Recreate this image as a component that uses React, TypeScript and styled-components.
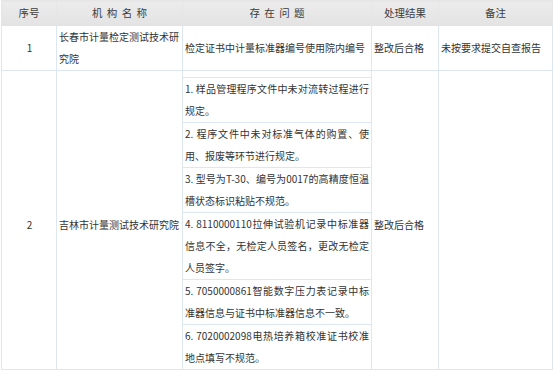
import React from 'react';
import styled, { createGlobalStyle } from 'styled-components';

const GlobalStyle = createGlobalStyle`
  html, body {
    margin: 0;
    padding: 0;
    background: #ffffff;
  }
  body {
    font-family: "Noto Sans CJK SC", "Noto Sans", sans-serif;
    color: #333333;
  }
`;

const Table = styled.table`
  width: 551px;
  margin: 0 0 0 1px;
  border-collapse: collapse;
  table-layout: fixed;
  font-size: 10px;
  line-height: 22px;
  color: #333333;

  th, td {
    box-sizing: border-box;
  }
`;

const Col = styled.col<{ $w: number }>`
  width: ${(p) => p.$w}px;
`;

const HeadCell = styled.th`
  height: 25px;
  padding: 0;
  font-weight: normal;
  font-size: 10.5px;
  color: #3c3c3c;
  text-align: center;
  vertical-align: middle;
  background: linear-gradient(#ececec, #e3e3e3);
  border: 1px solid #e6e6e6;
  border-bottom-color: #dae5f2;
  word-spacing: 2px;
`;

const Cell = styled.td<{ $align?: 'left' | 'center'; $pad?: number }>`
  padding: ${(p) => p.$pad ?? 0}px 1px 0 2px;
  border: 1px solid #dde7f3;
  text-align: ${(p) => p.$align ?? 'left'};
  vertical-align: middle;
  word-break: break-all;
`;

const IssueCell = styled.td<{ $empty?: boolean }>`
  padding: ${(p) => (p.$empty ? '0' : '0 2px')};
  height: ${(p) => (p.$empty ? '7px' : 'auto')};
  line-height: ${(p) => (p.$empty ? '0' : 'inherit')};
  border: 1px solid #dde7f3;
  vertical-align: top;
`;

const Line = styled.span<{ $justify?: boolean }>`
  display: block;
  text-align: ${(p) => (p.$justify ? 'justify' : 'left')};
  text-align-last: ${(p) => (p.$justify ? 'justify' : 'left')};
  white-space: nowrap;
`;

const issues: string[][] = [
  ['1. 样品管理程序文件中未对流转过程进行', '规定。'],
  ['2. 程序文件中未对标准气体的购置、使', '用、报废等环节进行规定。'],
  ['3. 型号为T-30、编号为0017的高精度恒温', '槽状态标识粘贴不规范。'],
  ['4. 8110000110拉伸试验机记录中标准器', '信息不全，无检定人员签名，更改无检定', '人员签字。'],
  ['5. 7050000861智能数字压力表记录中标', '准器信息与证书中标准器信息不一致。'],
  ['6. 7020002098电热培养箱校准证书校准', '地点填写不规范。'],
];

const Issue: React.FC<{ lines: string[] }> = ({ lines }) => (
  <IssueCell>
    {lines.map((l, i) => (
      <Line key={i} $justify={i < lines.length - 1}>
        {l}
      </Line>
    ))}
  </IssueCell>
);

const App: React.FC = () => {
  const span = issues.length + 1;
  return (
    <>
      <GlobalStyle />
      <Table>
        <colgroup>
          <Col $w={55} />
          <Col $w={126} />
          <Col $w={189} />
          <Col $w={67} />
          <Col $w={114} />
        </colgroup>
        <thead>
          <tr>
            <HeadCell>序号</HeadCell>
            <HeadCell>机 构 名 称</HeadCell>
            <HeadCell>存 在 问 题</HeadCell>
            <HeadCell>处理结果</HeadCell>
            <HeadCell>备注</HeadCell>
          </tr>
        </thead>
        <tbody>
          <tr>
            <Cell $align="center">1</Cell>
            <Cell>长春市计量检定测试技术研究院</Cell>
            <Cell>
              <Line>检定证书中计量标准器编号使用院内编号</Line>
            </Cell>
            <Cell>整改后合格</Cell>
            <Cell>未按要求提交自查报告</Cell>
          </tr>
          <tr>
            <Cell $align="center" $pad={9} rowSpan={span}>2</Cell>
            <Cell $pad={9} rowSpan={span}>吉林市计量测试技术研究院</Cell>
            <IssueCell $empty />
            <Cell $pad={9} rowSpan={span}>整改后合格</Cell>
            <Cell rowSpan={span} />
          </tr>
          {issues.map((lines, i) => (
            <tr key={i}>
              <Issue lines={lines} />
            </tr>
          ))}
        </tbody>
      </Table>
    </>
  );
};

export default App;
